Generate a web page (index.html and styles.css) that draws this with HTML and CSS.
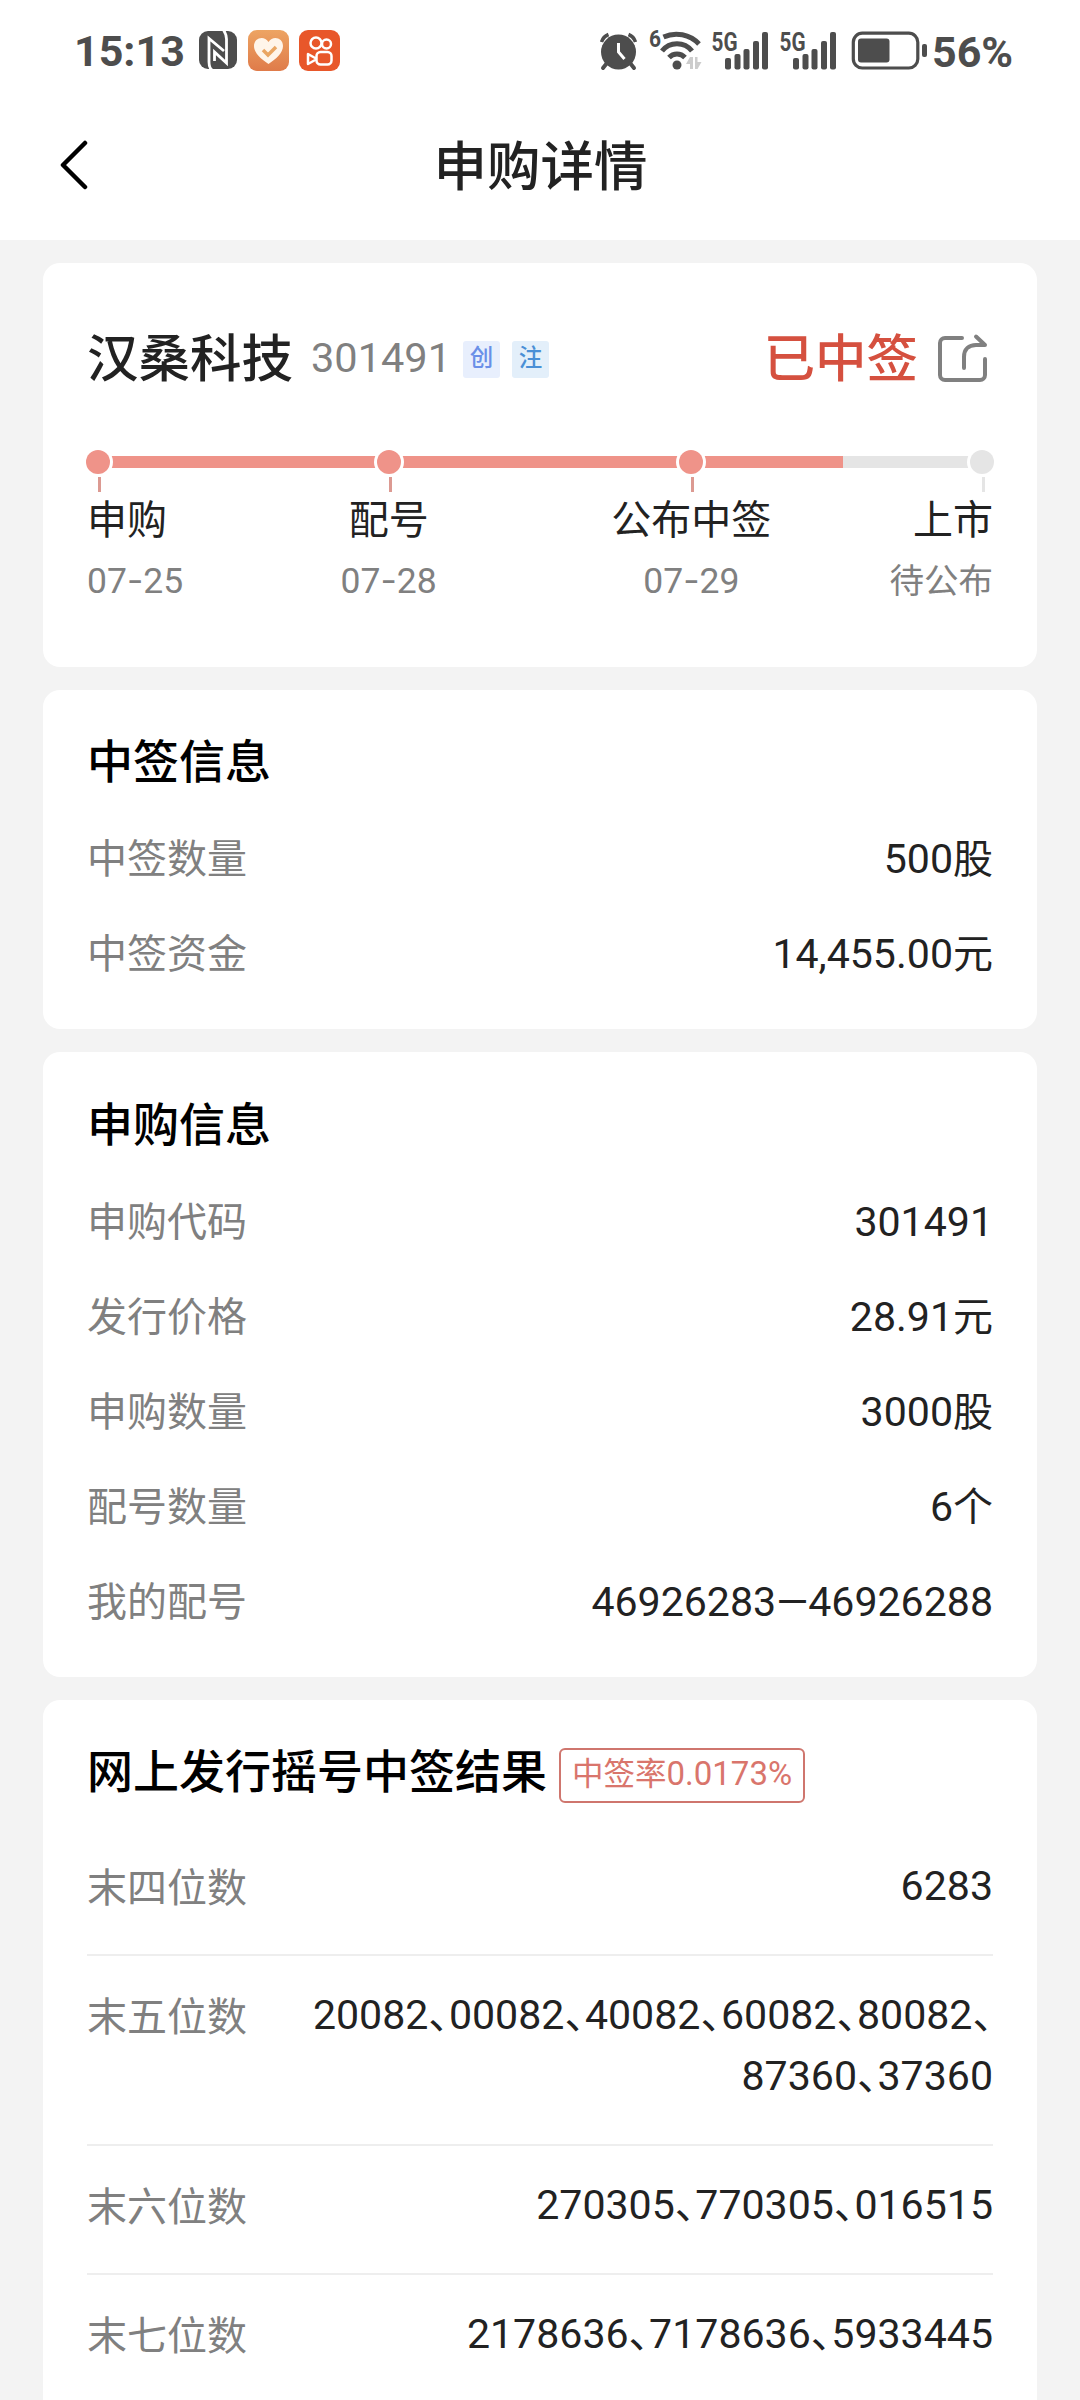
FILE: index.html
```
<!DOCTYPE html>
<html lang="zh-CN">
<head>
    <meta charset="UTF-8">
    <meta name="viewport" content="width=device-width, initial-scale=1.0">
    <title>申购详情</title>
    <link rel="stylesheet" href="styles.css">
</head>
<body>
    <div class="status-bar">
        <div class="status-left">
            <span class="time">15:13</span>
            <svg class="nfc" width="38" height="38" viewBox="0 0 38 38">
                <rect width="38" height="38" rx="9" fill="#4d4d4d"/>
                <g fill="none" stroke="#fff" stroke-width="2.800">
                    <path d="M13 39C10 37 10 34 10 31V7.500L25 20"/>
                    <path d="M15.500 30V21L27.500 32V8c0-4-1-6-3-9"/>
                </g>
            </svg>
            <svg class="app" width="41" height="41" viewBox="0 0 41 41">
                <defs>
                    <linearGradient id="orange" x1="0" y1="0" x2="0" y2="1">
                        <stop offset="0" stop-color="#eda463"/>
                        <stop offset="1" stop-color="#df7b4a"/>
                    </linearGradient>
                </defs>
                <rect width="41" height="41" rx="9" fill="url(#orange)"/>
                <path d="M20.500 34C13 29 6 23 6 16C6 8 16 5 20.500 12C25 5 35 8 35 16C35 23 28 29 20.500 34Z" fill="#fff5ea"/>
                <path d="M15 20l5 5 8-8" fill="none" stroke="#eaa663" stroke-width="3.500"/>
            </svg>
            <svg class="app" width="41" height="41" viewBox="0 0 41 41">
                <rect width="41" height="41" rx="9" fill="#e8572a"/>
                <g fill="none" stroke="#fff" stroke-width="2.500">
                    <circle cx="17" cy="13" r="5.500"/>
                    <circle cx="27.500" cy="14" r="4.500"/>
                    <rect x="17.500" y="22" width="15" height="12.500" rx="4"/>
                    <path d="M17 28.500l-8-4.500v10l8-4.500" stroke-linejoin="round"/>
                </g>
            </svg>
        </div>
        <svg class="status-icons" width="330" height="60" viewBox="598 20 330 60">
            <g fill="#4d4d4d">
                <circle cx="618.500" cy="52" r="17.500"/>
                <path d="M607 63l-4 5M630 63l4 5" stroke="#4d4d4d" stroke-width="4" stroke-linecap="round"/>
                <path d="M601.500 42a12 12 0 0 1 7-7.500M635.500 42a12 12 0 0 0-7-7.500" fill="none" stroke="#4d4d4d" stroke-width="3.500"/>
                <path d="M618.500 43v9l6 7" fill="none" stroke="#fff" stroke-width="3"/>
                <g fill="none" stroke="#4d4d4d" stroke-width="5">
                    <path d="M663.500 37a31 31 0 0 1 35.500 7"/>
                    <path d="M662 51a19 19 0 0 1 30 0"/>
                    <path d="M669 57.500a11 11 0 0 1 16 0"/>
                </g>
                <circle cx="677" cy="65" r="4.500"/>
                <path d="M686 64l4-7h3v12h-3v-5zM695 57h2.500v5h4l-4 7h-2.500z" fill="#ccc"/>
            </g>
            <g id="signal" fill="#4d4d4d">
                <rect x="725" y="58" width="6" height="11.500" rx="2"/>
                <rect x="734.500" y="54" width="6" height="15.500" rx="2"/>
                <rect x="743.500" y="49" width="6" height="20.500" rx="2"/>
                <rect x="753" y="41" width="6" height="28.500" rx="2"/>
                <rect x="762" y="32" width="6" height="37.500" rx="2"/>
                <text x="711.500" y="51" class="net" textLength="26" lengthAdjust="spacingAndGlyphs">5G</text>
            </g>
            <use href="#signal" x="68"/>
            <text x="649" y="46.500" class="wifi-gen" textLength="12" lengthAdjust="spacingAndGlyphs">6</text>
            <rect x="853.300" y="33.200" width="64.500" height="34.800" rx="9" fill="none" stroke="#4d4d4d" stroke-width="3.200"/>
            <rect x="858" y="38.500" width="31.500" height="24" rx="3" fill="#4d4d4d"/>
            <rect x="922" y="44" width="5" height="13" rx="2" fill="#4d4d4d"/>
        </svg>
        <span class="battery">56%</span>
    </div>

    <div class="nav">
        <svg class="back" width="30" height="52" viewBox="0 0 30 52">
            <path d="M25 4L3 26l22 22" fill="none" stroke="#000" stroke-width="4.500" stroke-linecap="round" stroke-linejoin="round"/>
        </svg>
        <h1>申购详情</h1>
    </div>

    <div class="content">
        <div class="card summary">
            <div class="stock">
                <span class="stock-name">汉桑科技</span>
                <span class="stock-code">301491</span>
                <span class="tag tag-cy">创</span>
                <span class="tag tag-zc">注</span>
                <span class="result">已中签</span>
                <svg class="share" width="50" height="50" viewBox="0 0 50 50">
                    <g fill="none" stroke="#808080" stroke-width="4" stroke-linecap="round" stroke-linejoin="round">
                        <path d="M25 5H8a5 5 0 0 0-5 5v32a5 5 0 0 0 5 5h35a5 5 0 0 0 5-5V26"/>
                        <path d="M27 35V24c0-8 5-12 12-12h9l-9-8.500"/>
                    </g>
                </svg>
            </div>
            <div class="steps">
                <div class="step first">
                    <div class="track"><i class="dot"></i></div>
                    <i class="tick"></i>
                    <p class="step-name">申购</p>
                    <p class="step-date">07<b>-</b>25</p>
                </div>
                <div class="step">
                    <div class="track"><i class="dot"></i></div>
                    <i class="tick"></i>
                    <p class="step-name">配号</p>
                    <p class="step-date">07<b>-</b>28</p>
                </div>
                <div class="step">
                    <div class="track"><i class="dot"></i></div>
                    <i class="tick"></i>
                    <p class="step-name">公布中签</p>
                    <p class="step-date">07<b>-</b>29</p>
                </div>
                <div class="step last">
                    <div class="track"><i class="dot"></i></div>
                    <i class="tick"></i>
                    <p class="step-name">上市</p>
                    <p class="step-date">待公布</p>
                </div>
            </div>
        </div>

        <div class="card">
            <h2>中签信息</h2>
            <div class="row"><span class="label">中签数量</span><span class="value">500<em>股</em></span></div>
            <div class="row"><span class="label">中签资金</span><span class="value">14,455.00<em>元</em></span></div>
        </div>

        <div class="card apply">
            <h2>申购信息</h2>
            <div class="row"><span class="label">申购代码</span><span class="value">301491</span></div>
            <div class="row"><span class="label">发行价格</span><span class="value">28.91<em>元</em></span></div>
            <div class="row"><span class="label">申购数量</span><span class="value">3000<em>股</em></span></div>
            <div class="row"><span class="label">配号数量</span><span class="value">6<em>个</em></span></div>
            <div class="row"><span class="label">我的配号</span><span class="value">46926283—46926288</span></div>
        </div>

        <div class="card lottery">
            <h2>网上发行摇号中签结果<span class="rate">中签率<b>0.0173%</b></span></h2>
            <div class="line"><span class="label">末四位数</span><span class="value">6283</span></div>
            <div class="line"><span class="label">末五位数</span><span class="value">20082、00082、40082、60082、80082、<br>87360、37360</span></div>
            <div class="line"><span class="label">末六位数</span><span class="value">270305、770305、016515</span></div>
            <div class="line"><span class="label">末七位数</span><span class="value">2178636、7178636、5933445</span></div>
        </div>
    </div>
</body>
</html>
```
FILE: styles.css
```
* { box-sizing: border-box; margin: 0; padding: 0; }
body { width: 1080px; height: 2400px; overflow: hidden; background: #f3f3f3; color: #222; font-family: Roboto, "Noto Sans CJK SC", sans-serif; }
svg { display: block; flex: none; }
i, em { font-style: normal; }

.status-bar { display: flex; justify-content: space-between; height: 100px; padding: 28px 66px 28px 74px; background: #fff; color: #4d4d4d; }
.status-left { display: flex; flex: 1; align-items: center; }
.status-icons { margin: -8px 0; }
.time { width: 125px; padding-top: 2px; font-size: 43px; font-weight: 700; line-height: 44px; }
.nfc { margin-right: 11px; }
.app { margin-right: 10px; }
.net { font-size: 26px; font-weight: 700; }
.wifi-gen { fill: #4d4d4d; font-size: 23px; font-weight: 700; }
.battery { width: 82px; margin-left: 4px; font-size: 43px; font-weight: 700; line-height: 48px; }

.nav { display: flex; align-items: center; height: 140px; padding: 0 60px; background: #fff; }
.back { margin-bottom: 11px; }
.nav h1 { flex: 1; padding-right: 29px; margin-bottom: 5px; font-size: 53.5px; font-weight: 500; line-height: 60px; text-align: center; }

.content { display: flex; flex-direction: column; gap: 23px; padding: 23px 43px 0; }
.card { padding: 24px 44px 28px; background: #fff; border-radius: 17px; }
.card h2 { display: flex; align-items: center; color: #000; font-size: 46px; font-weight: 500; line-height: 97px; height: 97px; }

.summary { height: 404px; }
.stock { display: flex; align-items: center; height: 140px; }
.stock-name { margin-bottom: 6px; font-size: 51.5px; font-weight: 500; }
.stock-code { margin-left: 18px; color: #808080; font-size: 41.5px; }
.tag { width: 37px; height: 37px; margin: 5px 0 0 12px; border-radius: 3px; font-size: 23.5px; font-weight: 500; line-height: 35px; text-align: center; }
.tag-cy { background: #e8effd; color: #6a8fe8; }
.tag-zc { background: #e3effa; color: #4a8fd6; }
.result { margin: 0 0 6px auto; color: #d5503f; font-size: 51.5px; font-weight: 500; }
.share { margin: 2px 6px 0 19px; }

.steps { display: grid; grid-template-columns: 1fr 2fr 2fr 1fr; margin: 29px -1px 0; }
.step { display: flex; flex-direction: column; align-items: center; }
.track { display: flex; align-items: center; justify-content: center; width: 100%; height: 12px; background: #ef9389; }
.dot { width: 24px; height: 24px; border-radius: 50%; background: #ef9389; box-shadow: 0 0 0 3px #fff; }
.tick { width: 3px; height: 15px; margin: 9px 0 0 3px; background: #dc9a92; }
.step-name { margin-top: 3px; font-size: 40px; line-height: 52px; white-space: nowrap; }
.step-date { margin-top: 10px; color: #808080; font-size: 35.5px; line-height: 48px; white-space: nowrap; }
.step-date b { font-family: Inter; font-weight: 400; }
.first { align-items: flex-start; }
.first .track { justify-content: flex-start; }
.first .tick { margin-left: 12px; }
.first .step-name, .first .step-date { padding-left: 1px; }
.last { align-items: flex-end; }
.last .track { justify-content: flex-end; background: #e5e5e5; }
.last .dot, .last .tick { background: #e5e5e5; }
.last .tick { margin-right: 9px; }
.last .step-name, .last .step-date { padding-right: 1px; }
.last .step-date { font-size: 34.5px; }

.row { display: flex; align-items: center; justify-content: space-between; height: 95px; line-height: 61px; }
.label { padding-top: 2px; color: #808080; font-size: 40px; }
.value { font-size: 41.1px; text-align: right; font-feature-settings: "halt"; }
.value em { font-size: 40px; }
.row .value { padding-top: 1px; }

.apply { padding: 25px 44px 28px; }
.lottery h2 { margin-bottom: 6px; }
.rate { height: 55px; margin: 5px 0 0 12px; padding: 0 11px; border: 2px solid #cf766e; border-radius: 6px; color: #d9756c; font-size: 31.5px; font-weight: 400; line-height: 48px; }
.rate b { font-size: 33px; font-weight: 400; }
.line { display: flex; justify-content: space-between; height: 129px; padding-top: 29px; border-bottom: 2px solid #eee; line-height: 61px; }
.line:nth-child(3) { height: 190px; }
```
